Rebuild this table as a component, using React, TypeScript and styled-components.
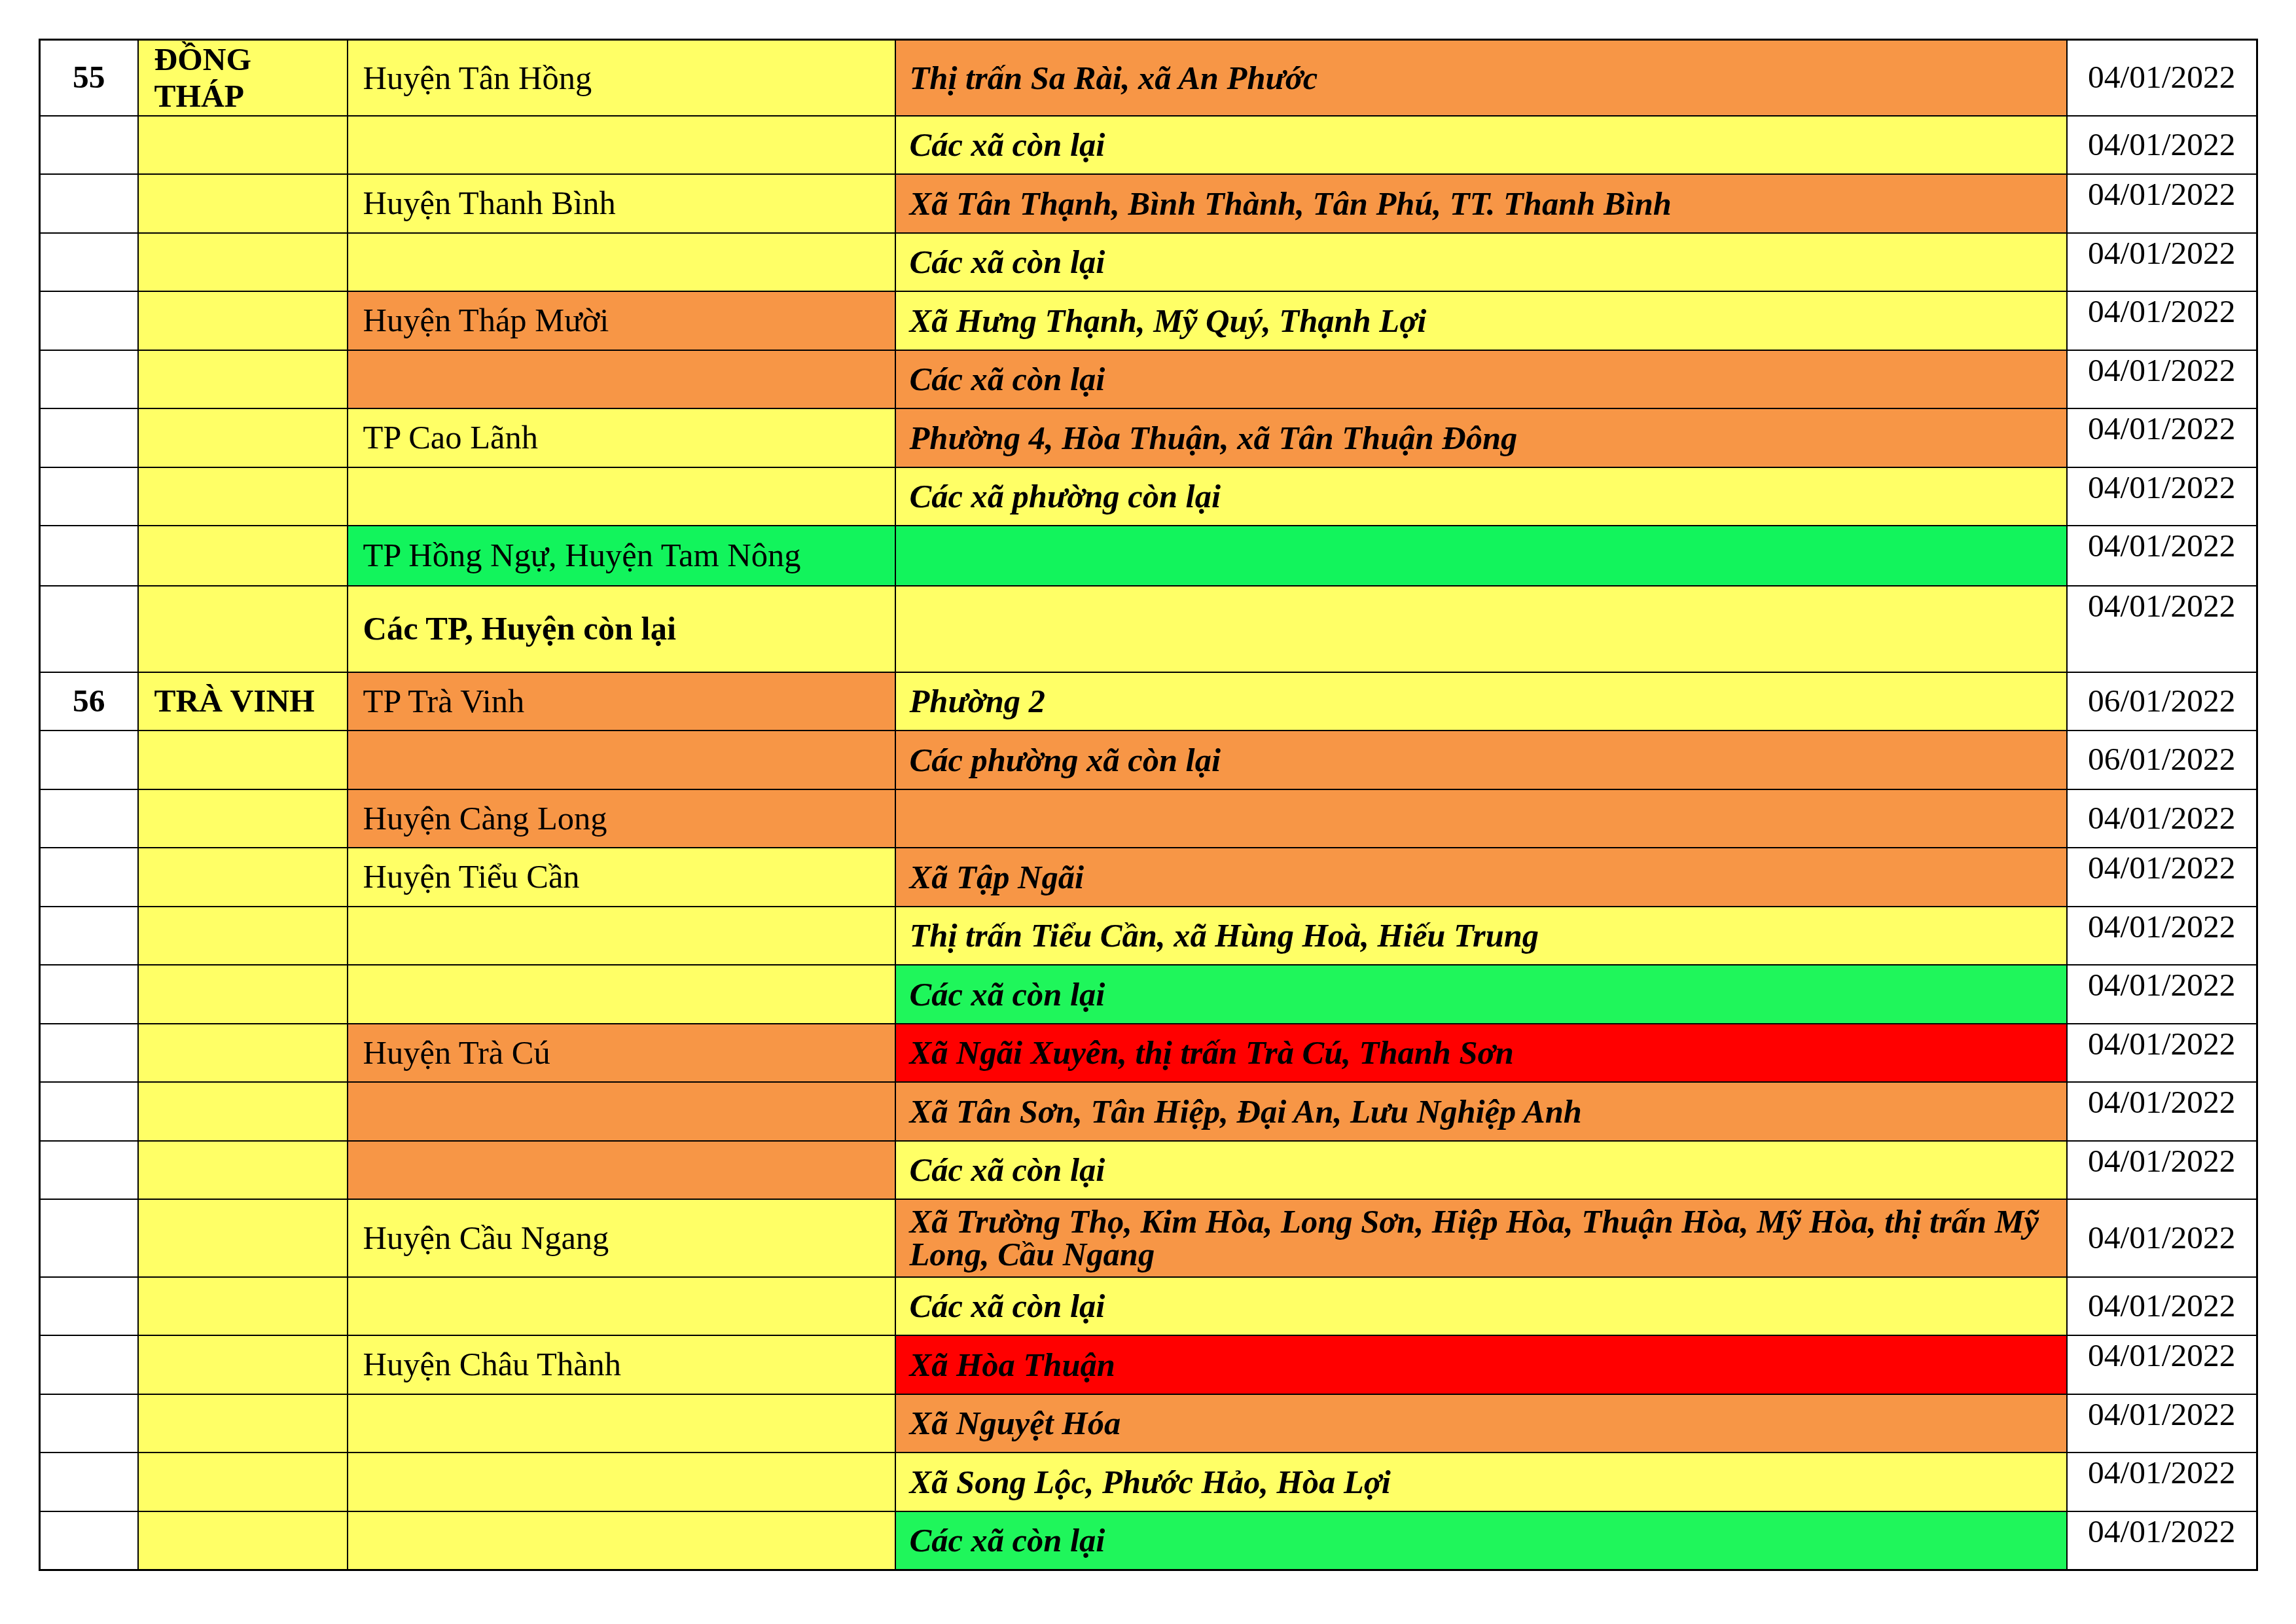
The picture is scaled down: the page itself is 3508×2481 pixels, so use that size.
import * as React from 'react';
import styled, { createGlobalStyle } from 'styled-components';

// fill colours used by the sheet
const YELLOW = '#ffff66';
const ORANGE = '#f79646';
const GREEN = '#12f45c';
const GREEN2 = '#1ff65b';
const RED = '#ff0000';

const GlobalStyle = createGlobalStyle`
  html, body {
    margin: 0;
    padding: 0;
    background: #ffffff;
  }
`;

const Page = styled.div`
  width: 3508px;
  height: 2481px;
  box-sizing: border-box;
  padding: 59px 0 0 59px;
  background: #ffffff;
  font-family: 'Liberation Serif', 'Times New Roman', serif;
  font-size: 50.5px;
  color: #000;
`;

const Table = styled.table`
  border-collapse: collapse;
  table-layout: fixed;
  width: 3390px;
  border: 3px solid #000;
`;

const Col = styled.col<{ $w: number }>`
  width: ${(p) => p.$w}px;
`;

const Row = styled.tr<{ $h: number }>`
  height: ${(p) => p.$h}px;
`;

const Cell = styled.td<{ $bg?: string; $top?: boolean }>`
  border: 2px solid #000;
  background: ${(p) => p.$bg || '#ffffff'};
  vertical-align: ${(p) => (p.$top ? 'top' : 'middle')};
  padding: 0;
  line-height: 1.15;
  white-space: nowrap;
  overflow: hidden;
`;

const NoCell = styled(Cell)`
  text-align: center;
  font-weight: bold;
  font-size: 49.5px;
`;

const ProvinceCell = styled(Cell)`
  padding-left: 24px;
  font-weight: bold;
  font-size: 49.5px;
  line-height: 56px;
  white-space: normal;
`;

const DistrictCell = styled(Cell)<{ $bold?: boolean }>`
  padding-left: 23px;
  font-weight: ${(p) => (p.$bold ? 'bold' : 'normal')};
`;

const CommuneCell = styled(Cell)`
  padding-left: 21px;
  font-weight: bold;
  font-style: italic;
  line-height: 50px;
`;

const DateCell = styled(Cell)`
  text-align: center;
  font-size: 49.5px;
  padding-top: ${(p) => (p.$top ? '2px' : '0')};
`;

type RowData = {
  h: number;
  no?: string;
  prov?: React.ReactNode;
  dist?: string;
  distBg: string;
  distBold?: boolean;
  comm?: React.ReactNode;
  commBg: string;
  date: string;
  top?: boolean;
};

const colWidths = [150, 320, 837, 1790, 291];

const rows: RowData[] = [
  { h: 116, no: '55', prov: <>ĐỒNG<br />THÁP</>, dist: 'Huyện Tân Hồng', distBg: YELLOW, comm: 'Thị trấn Sa Rài, xã An Phước', commBg: ORANGE, date: '04/01/2022' },
  { h: 89, distBg: YELLOW, comm: 'Các xã còn lại', commBg: YELLOW, date: '04/01/2022' },
  { h: 90, dist: 'Huyện Thanh Bình', distBg: YELLOW, comm: 'Xã Tân Thạnh, Bình Thành, Tân Phú, TT. Thanh Bình', commBg: ORANGE, date: '04/01/2022', top: true },
  { h: 89, distBg: YELLOW, comm: 'Các xã còn lại', commBg: YELLOW, date: '04/01/2022', top: true },
  { h: 90, dist: 'Huyện Tháp Mười', distBg: ORANGE, comm: 'Xã Hưng Thạnh, Mỹ Quý, Thạnh Lợi', commBg: YELLOW, date: '04/01/2022', top: true },
  { h: 89, distBg: ORANGE, comm: 'Các xã còn lại', commBg: ORANGE, date: '04/01/2022', top: true },
  { h: 90, dist: 'TP Cao Lãnh', distBg: YELLOW, comm: 'Phường 4, Hòa Thuận, xã Tân Thuận Đông', commBg: ORANGE, date: '04/01/2022', top: true },
  { h: 89, distBg: YELLOW, comm: 'Các xã phường còn lại', commBg: YELLOW, date: '04/01/2022', top: true },
  { h: 92, dist: 'TP Hồng Ngự, Huyện Tam Nông', distBg: GREEN, commBg: GREEN, date: '04/01/2022', top: true },
  { h: 132, dist: 'Các TP, Huyện còn lại', distBold: true, distBg: YELLOW, commBg: YELLOW, date: '04/01/2022', top: true },
  { h: 89, no: '56', prov: 'TRÀ VINH', dist: 'TP Trà Vinh', distBg: ORANGE, comm: 'Phường 2', commBg: YELLOW, date: '06/01/2022' },
  { h: 90, distBg: ORANGE, comm: 'Các phường xã còn lại', commBg: ORANGE, date: '06/01/2022' },
  { h: 89, dist: 'Huyện Càng Long', distBg: ORANGE, commBg: ORANGE, date: '04/01/2022' },
  { h: 90, dist: 'Huyện Tiểu Cần', distBg: YELLOW, comm: 'Xã Tập Ngãi', commBg: ORANGE, date: '04/01/2022', top: true },
  { h: 89, distBg: YELLOW, comm: 'Thị trấn Tiểu Cần, xã Hùng Hoà, Hiếu Trung', commBg: YELLOW, date: '04/01/2022', top: true },
  { h: 90, distBg: YELLOW, comm: 'Các xã còn lại', commBg: GREEN2, date: '04/01/2022', top: true },
  { h: 89, dist: 'Huyện Trà Cú', distBg: ORANGE, comm: 'Xã Ngãi Xuyên, thị trấn Trà Cú, Thanh Sơn', commBg: RED, date: '04/01/2022', top: true },
  { h: 90, distBg: ORANGE, comm: 'Xã Tân Sơn, Tân Hiệp, Đại An, Lưu Nghiệp Anh', commBg: ORANGE, date: '04/01/2022', top: true },
  { h: 89, distBg: ORANGE, comm: 'Các xã còn lại', commBg: YELLOW, date: '04/01/2022', top: true },
  {
    h: 119,
    dist: 'Huyện Cầu Ngang',
    distBg: YELLOW,
    comm: <>Xã Trường Thọ, Kim Hòa, Long Sơn, Hiệp Hòa, Thuận Hòa, Mỹ Hòa, thị trấn Mỹ<br />Long, Cầu Ngang</>,
    commBg: ORANGE,
    date: '04/01/2022',
  },
  { h: 89, distBg: YELLOW, comm: 'Các xã còn lại', commBg: YELLOW, date: '04/01/2022' },
  { h: 90, dist: 'Huyện Châu Thành', distBg: YELLOW, comm: 'Xã Hòa Thuận', commBg: RED, date: '04/01/2022', top: true },
  { h: 89, distBg: YELLOW, comm: 'Xã Nguyệt Hóa', commBg: ORANGE, date: '04/01/2022', top: true },
  { h: 90, distBg: YELLOW, comm: 'Xã Song Lộc, Phước Hảo, Hòa Lợi', commBg: YELLOW, date: '04/01/2022', top: true },
  { h: 90, distBg: YELLOW, comm: 'Các xã còn lại', commBg: GREEN2, date: '04/01/2022', top: true },
];

const App = () => {
  return (
    <>
      <GlobalStyle />
      <Page>
        <Table>
          <colgroup>
            {colWidths.map((w, i) => (
              <Col key={i} $w={w} />
            ))}
          </colgroup>
          <tbody>
            {rows.map((r, i) => (
              <Row key={i} $h={r.h}>
                <NoCell>{r.no}</NoCell>
                <ProvinceCell $bg={YELLOW}>{r.prov}</ProvinceCell>
                <DistrictCell $bg={r.distBg} $bold={r.distBold}>
                  {r.dist}
                </DistrictCell>
                <CommuneCell $bg={r.commBg}>{r.comm}</CommuneCell>
                <DateCell $top={r.top}>{r.date}</DateCell>
              </Row>
            ))}
          </tbody>
        </Table>
      </Page>
    </>
  );
};

export default App;
